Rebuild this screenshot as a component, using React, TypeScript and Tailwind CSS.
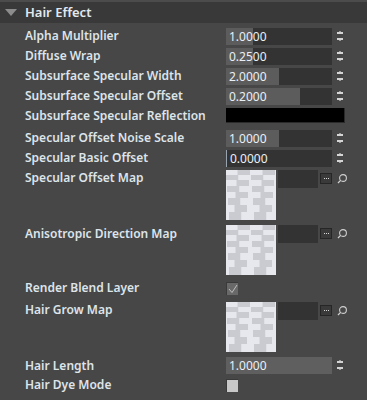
const labelCls =
  "w-[226px] shrink-0 pl-[25px] h-[18px] leading-[18px] text-[12px] font-semibold text-[#dde4ea] whitespace-nowrap";

function Spinner() {
  return (
    <svg width="8" height="14" viewBox="0 0 8 14" className="ml-[4px] mt-[1px]">
      <rect x="3" y="2" width="2" height="1" fill="#9a9a9a" />
      <rect x="1" y="3" width="6" height="2" fill="#d4d4d4" />
      <rect x="1" y="9" width="6" height="2" fill="#d4d4d4" />
      <rect x="3" y="11" width="2" height="1" fill="#9a9a9a" />
    </svg>
  );
}

function NumField({ value, pct, full, cursor }: { value: string; pct: number; full?: boolean; cursor?: boolean }) {
  return (
    <div className="flex items-start mt-[1px]">
      <div
        className={`relative w-[106px] h-[17px] ${full ? "bg-[#5f5f5f]" : "bg-[#333333]"} ${cursor ? "border-l border-[#9aa4ae]" : ""}`}
      >
        <div className="absolute left-0 top-0 h-full bg-[#5c5c5c]" style={{ width: `${pct}%` }} />
        <span className="absolute left-[3px] top-0 leading-[17px] text-[12px] text-[#eaf0f6]">{value}</span>
      </div>
      <Spinner />
    </div>
  );
}

function Texture() {
  const rows = [5, 5, 6, 6, 6, 7, 7, 8];
  const offs = [-1, 0, -2, 1, -3, 2, -4, 3];
  let y = 0;
  const rects: JSX.Element[] = [];
  rows.forEach((h, i) => {
    const off = offs[i] - 12.5;
    for (let c = 0; c < 6; c++) {
      const x = off + c * 12.5;
      rects.push(
        <rect
          key={`${i}-${c}`}
          x={x}
          y={y}
          width="12.5"
          height={h}
          fill={(c + i) % 2 === 0 ? "#c9cbd1" : "#e6e8ed"}
        />
      );
    }
    y += h;
  });
  return (
    <svg width="50" height="50" viewBox="0 0 50 50" className="shrink-0">
      <rect width="50" height="50" fill="#e6e8ed" />
      {rects}
    </svg>
  );
}

function MapField() {
  return (
    <div className="flex items-start mt-[1px]">
      <Texture />
      <div className="ml-[2px] w-[40px] h-[18px] bg-[#333333]" />
      <div className="ml-[2px] mt-[3px] w-[12px] h-[11px] bg-[#3a3a3a] border border-[#262626] flex items-center justify-center gap-[1px]">
        <span className="w-[1px] h-[1px] bg-[#d8d8d8]" />
        <span className="w-[1px] h-[1px] bg-[#d8d8d8]" />
        <span className="w-[1px] h-[1px] bg-[#d8d8d8]" />
      </div>
      <svg width="12" height="12" viewBox="0 0 12 12" className="ml-[4px] mt-[3px]">
        <circle cx="7" cy="5" r="3.4" fill="none" stroke="#d0d0d0" strokeWidth="1.1" />
        <path d="M4.6 7.4 L2 10" stroke="#d0d0d0" strokeWidth="1.3" />
      </svg>
    </div>
  );
}

export default function App() {
  return (
    <div className="w-[367px] h-[400px] bg-[#474747] overflow-hidden" style={{ fontFamily: '"Noto Sans", sans-serif' }}>
      <div className="h-[2px] bg-[#4c4c4c]" />
      <div className="h-[21px] bg-[#393939] flex items-center">
        <svg width="12" height="8" viewBox="0 0 12 8" className="ml-[5px] mt-[1px]">
          <polygon points="0,0 12,0 6,7" fill="#8c8c8c" />
        </svg>
        <span className="ml-[8px] text-[13px] font-semibold text-[#e2e8ee]">Hair Effect</span>
      </div>

      <div className="pt-[4px]">
        <div className="flex h-[20px]">
          <div className={labelCls}>Alpha Multiplier</div>
          <NumField value="1.0000" pct={25} />
        </div>
        <div className="flex h-[20px]">
          <div className={labelCls}>Diffuse Wrap</div>
          <NumField value="0.2500" pct={25} />
        </div>
        <div className="flex h-[20px]">
          <div className={labelCls}>Subsurface Specular Width</div>
          <NumField value="2.0000" pct={50} />
        </div>
        <div className="flex h-[20px]">
          <div className={labelCls}>Subsurface Specular Offset</div>
          <NumField value="0.2000" pct={70} />
        </div>
        <div className="flex h-[22px]">
          <div className={labelCls}>Subsurface Specular Reflection</div>
          <div className="mt-[1px] w-[119px] h-[15px] bg-black border-r border-b border-[#2a2a2a]" />
        </div>
        <div className="flex h-[20px]">
          <div className={labelCls}>Specular Offset Noise Scale</div>
          <NumField value="1.0000" pct={50} />
        </div>
        <div className="flex h-[20px]">
          <div className={labelCls}>Specular Basic Offset</div>
          <NumField value="0.0000" pct={0} cursor />
        </div>
        <div className="flex h-[55px]">
          <div className={labelCls}>Specular Offset Map</div>
          <MapField />
        </div>
        <div className="flex h-[55px]">
          <div className={`${labelCls} mt-[1px]`}>Anisotropic Direction Map</div>
          <MapField />
        </div>
        <div className="flex h-[22px]">
          <div className={labelCls}>Render Blend Layer</div>
          <div className="mt-[3px] w-[12px] h-[13px] bg-[#696969] border-t border-l border-[#3a3a3a] flex items-center justify-center">
            <svg width="10" height="10" viewBox="0 0 10 10">
              <path d="M1 5 L4 8.5 L9 1" fill="none" stroke="#c8c8c8" strokeWidth="0.9" />
            </svg>
          </div>
        </div>
        <div className="flex h-[55px]">
          <div className={labelCls}>Hair Grow Map</div>
          <MapField />
        </div>
        <div className="flex h-[22px]">
          <div className={`${labelCls} mt-[1px]`}>Hair Length</div>
          <NumField value="1.0000" pct={0} full />
        </div>
        <div className="flex h-[20px]">
          <div className={`${labelCls} -mt-[2px]`}>Hair Dye Mode</div>
          <div className="mt-[1px] w-[12px] h-[13px] bg-[#c8c8c8] border-t border-l border-[#3a3a3a]" />
        </div>
      </div>
    </div>
  );
}
